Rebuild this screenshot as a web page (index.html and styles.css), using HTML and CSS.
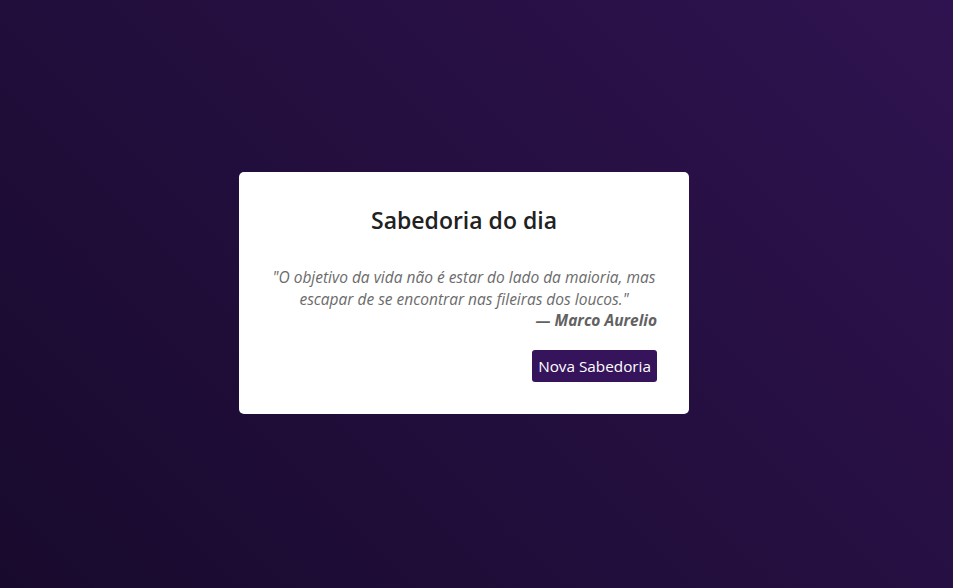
FILE: index.html
```html
<!DOCTYPE html>
<html lang="pt">
<head>
<meta charset="utf-8">
<title>Sabedoria do dia</title>
<link rel="stylesheet" href="styles.css">
</head>
<body>
<main class="page">
  <section class="card">
    <h1 class="title">Sabedoria do dia</h1>
    <blockquote class="quote">
      <p class="quote-text">"O objetivo da vida não é estar do lado da maioria, mas escapar de se encontrar nas fileiras dos loucos."</p>
      <p class="quote-author">— Marco Aurelio</p>
    </blockquote>
    <div class="actions">
      <button class="btn" type="button">Nova Sabedoria</button>
    </div>
  </section>
</main>
</body>
</html>
```
FILE: styles.css
```css
* { box-sizing: border-box; }
html, body { margin: 0; height: 100%; }
body {
  font-family: "Open Sans", "Noto Sans", sans-serif;
  background: linear-gradient(45deg, #180a2d 0%, #2f1350 100%);
  color: #222;
}
.page {
  height: 100%;
  display: flex;
  align-items: center;
  justify-content: center;
  padding: 0 25px 2px 0;
}
.card {
  width: 450px;
  background: #fff;
  border-radius: 5px;
  padding: 34px 32px 32px;
}
.title {
  margin: 0 0 32px;
  font-size: 23px;
  font-weight: 600;
  line-height: 29px;
  text-align: center;
  color: #212121;
}
.quote { margin: 0; }
.quote-text {
  margin: 0;
  font-style: italic;
  font-size: 15.5px;
  line-height: 21.5px;
  text-align: center;
  color: #6b6b6b;
}
.quote-author {
  margin: 0;
  font-style: italic;
  font-weight: 700;
  font-size: 15.5px;
  line-height: 21.5px;
  text-align: right;
  color: #626262;
}
.actions {
  display: flex;
  justify-content: flex-end;
  margin-top: 18px;
}
.btn {
  font-family: inherit;
  font-size: 15.3px;
  line-height: 20px;
  padding: 6px 6px;
  border: 0;
  border-radius: 3px;
  background: #36145c;
  color: #fff;
}
```
